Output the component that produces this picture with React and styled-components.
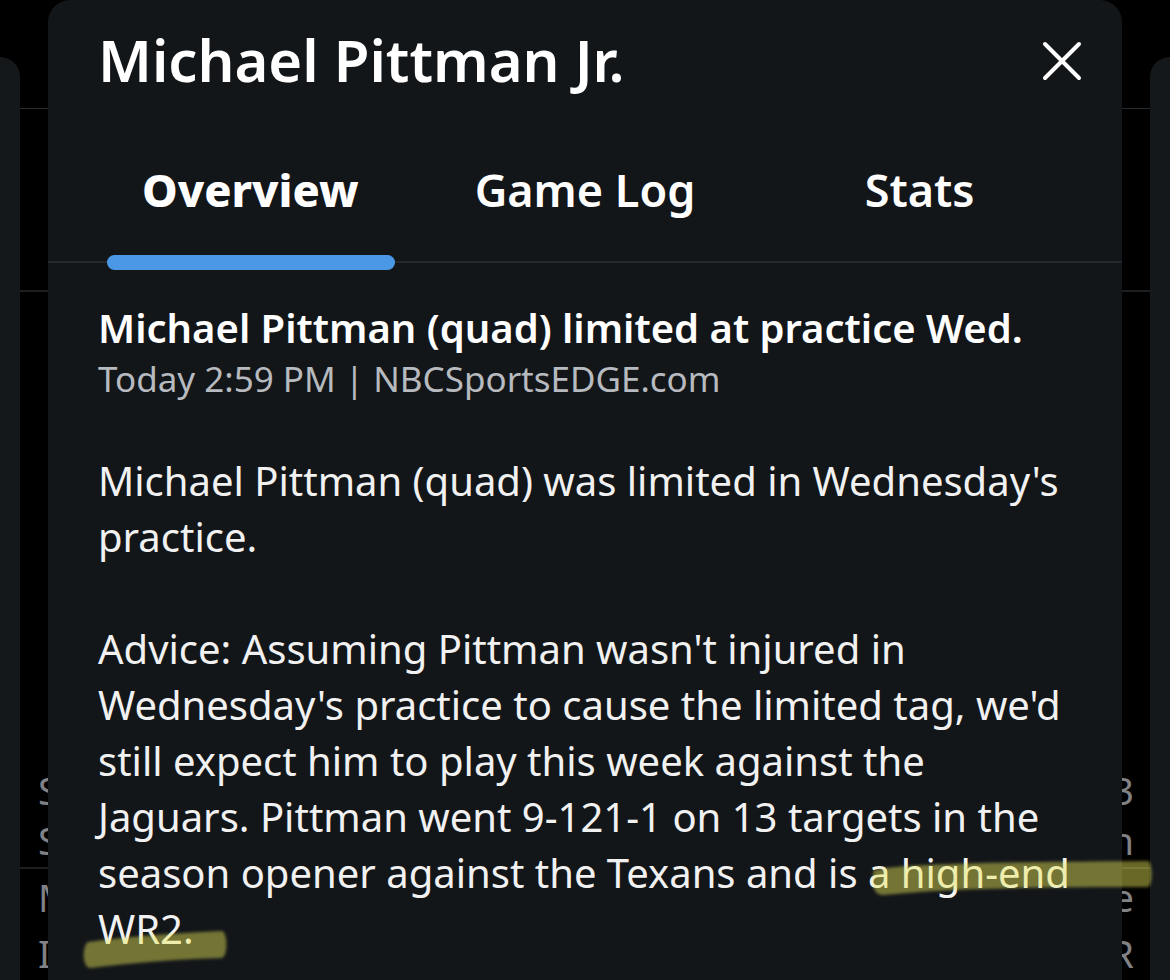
import React from "react";
import styled, { createGlobalStyle } from "styled-components";

const GlobalStyle = createGlobalStyle`
  html, body {
    margin: 0;
    padding: 0;
    background: #000;
  }
  body {
    font-family: "Noto Sans", "Open Sans", sans-serif;
    -webkit-font-smoothing: antialiased;
  }
`;

const Screen = styled.div`
  position: relative;
  width: 1170px;
  height: 980px;
  overflow: hidden;
  background: #000;
`;

/* page behind the sheet */
const Behind = styled.div`
  display: flex;
  height: 100%;
`;

const SideCard = styled.div`
  width: 20px;
  margin-top: 57px;
  background: #15181b;
  border-radius: ${(p) => (p.side === "left" ? "0 20px 0 0" : "20px 0 0 0")};
`;

const BehindList = styled.div`
  flex: 1;
  display: flex;
  flex-direction: column;
`;

const BehindBar = styled.div`
  height: ${(p) => p.h}px;
  border-bottom: ${(p) => p.line || "none"};
  flex-shrink: 0;
`;

const BehindRow = styled.div`
  display: flex;
  justify-content: space-between;
  align-items: center;
  height: ${(p) => p.h}px;
  padding: 0 16px 0 18px;
  color: #808286;
  font-size: 38px;
  border-bottom: ${(p) => p.line || "none"};
  flex-shrink: 0;
`;

/* the sheet */
const Sheet = styled.div`
  position: absolute;
  left: 48px;
  top: 0;
  width: 1074px;
  height: 1020px;
  background: #131619;
  border-radius: 22px 22px 0 0;
  display: flex;
  flex-direction: column;
`;

const Header = styled.div`
  display: flex;
  justify-content: space-between;
  align-items: center;
  padding: 18px 40px 0 50px;
  height: 100px;
  box-sizing: border-box;
`;

const Title = styled.h1`
  margin: 0;
  font-size: 58px;
  font-weight: 600;
  color: #fff;
`;

const CloseButton = styled.button`
  background: none;
  border: 0;
  padding: 0;
  margin-top: 4px;
  width: 40px;
  height: 40px;
  display: flex;
  align-items: center;
  justify-content: center;
  cursor: pointer;
`;

const Tabs = styled.div`
  display: grid;
  grid-template-columns: repeat(3, 1fr);
  padding: 0 35px;
  height: 163px;
  box-sizing: border-box;
  border-bottom: 2px solid #24272b;
`;

const Tab = styled.div`
  position: relative;
  display: flex;
  justify-content: center;
  align-items: center;
  padding-top: 18px;
  font-size: 45px;
  font-weight: ${(p) => (p.active ? 800 : 600)};
  color: #fff;

  &::after {
    content: "";
    display: ${(p) => (p.active ? "block" : "none")};
    position: absolute;
    left: 24px;
    right: 23px;
    bottom: -9px;
    height: 15px;
    border-radius: 8px;
    background: #4a98e6;
  }
`;

const Article = styled.div`
  padding: 40px 44px 0 50px;
`;

const Headline = styled.h2`
  margin: 0;
  font-size: 40px;
  font-weight: 600;
  line-height: 50px;
  color: #fff;
`;

const Meta = styled.div`
  font-size: 35px;
  line-height: 52px;
  color: #b7babf;
`;

const Body = styled.p`
  margin: 0;
  margin-top: ${(p) => p.mt || 0}px;
  font-size: 40px;
  line-height: 56px;
  color: #f1f1f1;
`;

const Marks = styled.svg`
  position: absolute;
  left: 0;
  top: 0;
  width: 1170px;
  height: 980px;
  pointer-events: none;
`;

function CloseIcon() {
  return (
    <svg width="40" height="40" viewBox="0 0 40 40">
      <path
        d="M3 3 L37 37 M37 3 L3 37"
        stroke="#fff"
        strokeWidth="4"
        strokeLinecap="round"
      />
    </svg>
  );
}

export default function App() {
  return (
    <Screen>
      <GlobalStyle />
      <Behind>
        <SideCard side="left" />
        <BehindList>
          <BehindBar h={108} line="1px solid #2a2c2f" />
          <BehindBar h={181} line="2px solid #1d1f22" />
          <BehindBar h={476} />
          <BehindRow h={44}>
            <span>S</span>
            <span>13</span>
          </BehindRow>
          <BehindRow h={55} line="2px solid #1d1f22">
            <span>S</span>
            <span>in</span>
          </BehindRow>
          <BehindRow h={56}>
            <span>M</span>
            <span>e</span>
          </BehindRow>
          <BehindRow h={56}>
            <span>I</span>
            <span>R</span>
          </BehindRow>
        </BehindList>
        <SideCard side="right" />
      </Behind>

      <Sheet>
        <Header>
          <Title>Michael Pittman Jr.</Title>
          <CloseButton aria-label="Close">
            <CloseIcon />
          </CloseButton>
        </Header>
        <Tabs>
          <Tab active>Overview</Tab>
          <Tab>Game Log</Tab>
          <Tab>Stats</Tab>
        </Tabs>
        <Article>
          <Headline>Michael Pittman (quad) limited at practice Wed.</Headline>
          <Meta>Today 2:59 PM | NBCSportsEDGE.com</Meta>
          <Body mt={48}>
            Michael Pittman (quad) was limited in Wednesday's practice.
          </Body>
          <Body mt={56}>
            Advice: Assuming Pittman wasn't injured in Wednesday's practice to
            cause the limited tag, we'd still expect him to play this week
            against the Jaguars. Pittman went 9-121-1 on 13 targets in the
            season opener against the Texans and is a high-end WR2.
          </Body>
        </Article>
      </Sheet>

      <Marks viewBox="0 0 1170 980">
        <defs>
          <filter id="soft" x="-5%" y="-40%" width="110%" height="180%">
            <feGaussianBlur stdDeviation="1.6" />
          </filter>
        </defs>
        <g fill="rgba(232, 230, 88, 0.45)" filter="url(#soft)">
          <path d="M874 870 C 900 864, 1000 862, 1148 861 C 1153 862, 1153 886, 1148 887 C 1040 887, 950 888, 884 895 C 874 896, 870 884, 874 870 Z" />
          <path d="M88 942 C 130 936, 180 933, 222 931 C 228 933, 228 956, 222 958 C 180 959, 130 963, 90 968 C 82 967, 82 946, 88 942 Z" />
        </g>
      </Marks>
    </Screen>
  );
}
